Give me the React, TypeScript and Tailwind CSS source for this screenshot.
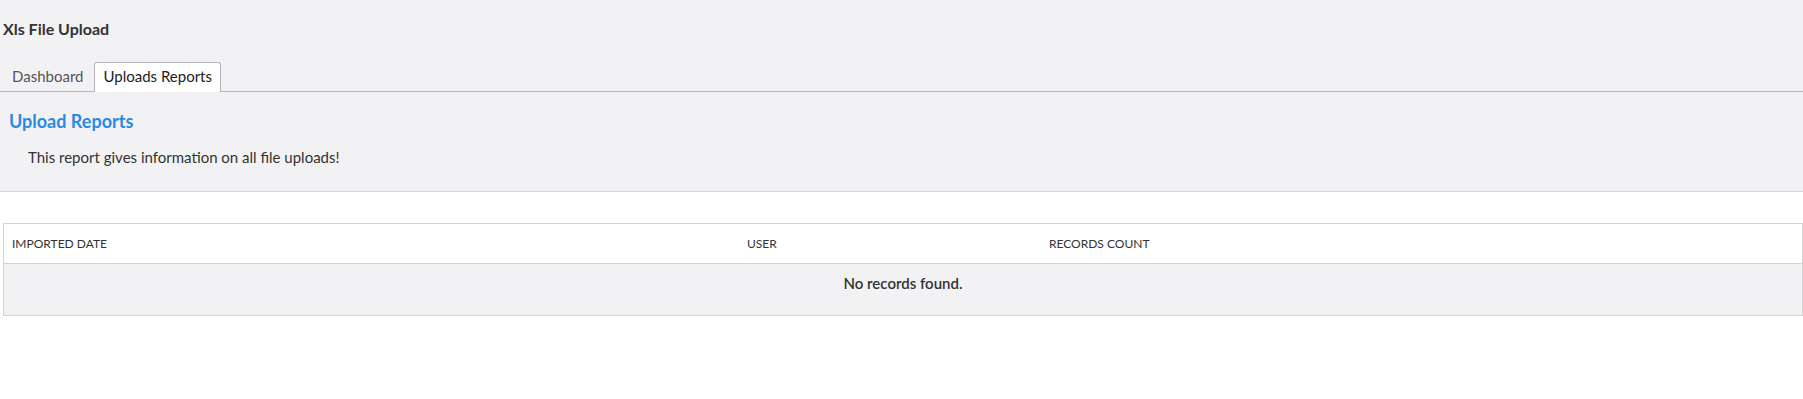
const columns = [
  { key: "date", label: "IMPORTED DATE", width: "w-[735px]" },
  { key: "user", label: "USER", width: "w-[302px]" },
  { key: "count", label: "RECORDS COUNT", width: "flex-1" },
];

const tabs = [
  { label: "Dashboard", active: false },
  { label: "Uploads Reports", active: true },
];

export default function App() {
  return (
    <div className="min-h-[399px] bg-white text-[#333333] font-['Lato','Liberation_Sans',sans-serif]">
      {/* Header area */}
      <div className="bg-[#f2f2f4] border-b border-[#d6d6d9] pt-[19px] pb-[24px]">
        <h1 className="px-[3px] text-[16px] leading-[20px] font-bold">Xls File Upload</h1>

        {/* Tabs */}
        <div className="mt-[23px] flex items-end border-b border-[#b4b4bc] pl-[3px]">
          {tabs.map((tab) => (
            <button
              key={tab.label}
              className={
                tab.active
                  ? "-mb-px mr-[2px] rounded-t-[3px] border border-b-0 border-[#b4b4bc] bg-white px-[8px] pt-[3px] pb-[6px] text-[15px] leading-[20px] text-[#222222]"
                  : "mr-[2px] border border-b-0 border-transparent px-[8px] pt-[3px] pb-[5px] text-[15px] leading-[20px] text-[#555555]"
              }
            >
              {tab.label}
            </button>
          ))}
        </div>

        <h2 className="mt-[18px] px-[9px] text-[18px] leading-[22px] font-bold text-[#2a8ae2]">Upload Reports</h2>
        <p className="mt-[15px] px-[28px] text-[15px] leading-[20px]">This report gives information on all file uploads!</p>
      </div>

      {/* Table */}
      <div className="mt-[31px] ml-[3px] w-[1800px] border border-[#d4d4d6]">
        <div className="flex h-[40px] items-center border-b border-[#d4d4d6] bg-white">
          {columns.map((col) => (
            <div key={col.key} className={`${col.width} px-[8px] text-[12px] leading-[16px] text-[#333333]`}>
              {col.label}
            </div>
          ))}
        </div>
        <div className="bg-[#f2f2f4] pt-[9px] pb-[22px] text-center text-[15px] leading-[20px] font-semibold text-[#333333]">
          No records found.
        </div>
      </div>
    </div>
  );
}
